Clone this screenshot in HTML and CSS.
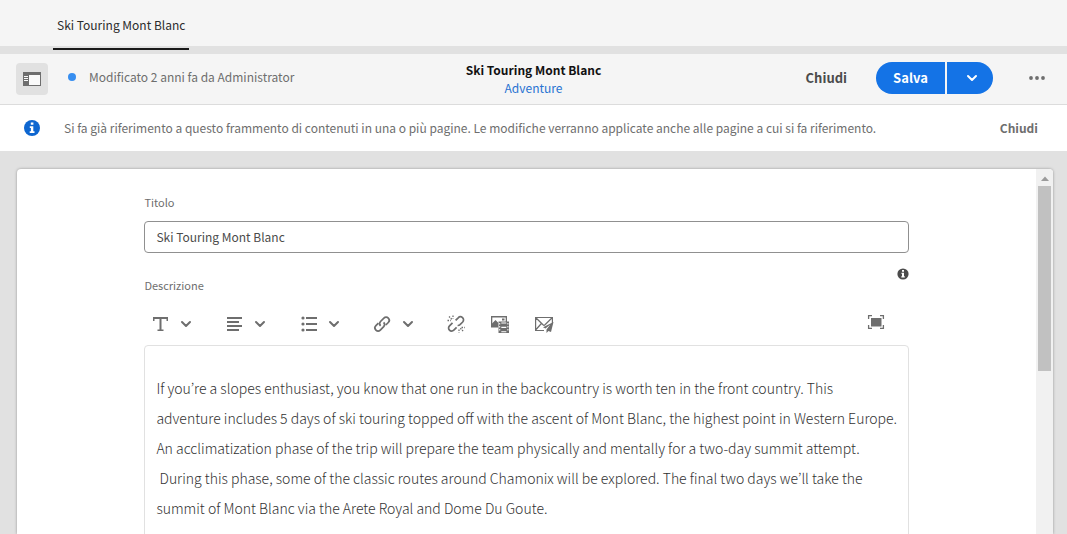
FILE: index.html
```html
<!DOCTYPE html>
<html lang="it">
<head>
<meta charset="utf-8">
<title>Ski Touring Mont Blanc</title>
<link rel="stylesheet" href="styles.css">
</head>
<body>
<nav class="tabs"><a class="tab" href="#">Ski Touring Mont Blanc</a></nav>
<header class="bar">
  <div class="bar-left">
    <button class="rail" aria-label="Pannello laterale">
      <svg width="20" height="16" viewBox="0 0 20 16"><path fill="#fafafa" d="M1 1h18v14H1z"/><path fill="#6e6e6e" fill-rule="evenodd" d="M1 1h18v14H1zM7 4v10h11V4zM2 5v1h4V5zM2 7v1h4V7zM2 9v1h4V9z"/></svg>
    </button>
    <span class="dot"></span>
    <span class="status">Modificato 2 anni fa da Administrator</span>
  </div>
  <div class="heading">
    <h1 class="title">Ski Touring Mont Blanc</h1>
    <a class="model" href="#">Adventure</a>
  </div>
  <div class="bar-right">
    <button class="quiet">Chiudi</button>
    <div class="split">
      <button class="save">Salva</button>
      <button class="save-more" aria-label="Altre opzioni di salvataggio"><svg width="12" height="8" viewBox="0 0 12 8"><path class="chev" d="M2 2l4 4 4-4"/></svg></button>
    </div>
    <button class="more" aria-label="Altro"><svg width="16" height="4" viewBox="0 0 16 4" fill="#6e6e6e"><circle cx="2" cy="2" r="1.900"/><circle cx="8" cy="2" r="1.900"/><circle cx="14" cy="2" r="1.900"/></svg></button>
  </div>
</header>
<div class="alert" role="status">
  <svg width="16" height="16" viewBox="0 0 16 16"><circle cx="8" cy="8" r="8" fill="#0d66d0"/><path fill="#fff" d="M6.800 2.500h2.600v2.300H6.800zM5.800 6.200h3.500v5h1.200V13H5.700v-1.800h1.200V8H5.800z"/></svg>
  <p class="alert-text">Si fa già riferimento a questo frammento di contenuti in una o più pagine. Le modifiche verranno applicate anche alle pagine a cui si fa riferimento.</p>
  <button class="dismiss">Chiudi</button>
</div>
<main class="stage">
  <section class="card">
    <div class="content">
      <form class="form">
        <label class="label" for="titolo">Titolo</label>
        <input class="field" id="titolo" type="text" value="Ski Touring Mont Blanc">
        <div class="hint"><svg width="12" height="12" viewBox="0 0 12 12"><circle cx="6" cy="6" r="5.600" fill="#4b4b4b"/><path fill="#fff" d="M5 2h2v1.700H5zM4.500 4.800H7v3.400h.8v1.300H4.300V8.200H5V6h-.5z"/></svg></div>
        <span class="label" id="descrizione">Descrizione</span>
        <div class="tools">
          <div class="group">
            <button type="button" class="tool" aria-label="Formato"><svg width="20" height="20" viewBox="0 0 20 20"><path class="ink" d="M3 3h15v4h-1.500V5h-5v10.500h2V17h-6v-1.500h2V5h-5v2H3z"/></svg></button>
            <button type="button" class="tool" aria-label="Opzioni formato"><svg width="12" height="8" viewBox="0 0 12 8"><path class="chev" d="M2 2l4 4 4-4"/></svg></button>
          </div>
          <div class="group">
            <button type="button" class="tool" aria-label="Allineamento"><svg width="20" height="20" viewBox="0 0 20 20"><path class="ink" d="M3 3h15v2H3zM3 7h12v2H3zM3 11h15v2H3zM3 15h12v2H3z"/></svg></button>
            <button type="button" class="tool" aria-label="Opzioni allineamento"><svg width="12" height="8" viewBox="0 0 12 8"><path class="chev" d="M2 2l4 4 4-4"/></svg></button>
          </div>
          <div class="group">
            <button type="button" class="tool" aria-label="Elenco"><svg width="20" height="20" viewBox="0 0 20 20"><path class="ink" d="M8 3h11v2H8zM8 9h11v2H8zM8 15h11v2H8z"/><g class="ink"><circle cx="5" cy="4" r="1.600"/><circle cx="5" cy="10" r="1.600"/><circle cx="5" cy="16" r="1.600"/></g></svg></button>
            <button type="button" class="tool" aria-label="Opzioni elenco"><svg width="12" height="8" viewBox="0 0 12 8"><path class="chev" d="M2 2l4 4 4-4"/></svg></button>
          </div>
          <div class="group">
            <button type="button" class="tool" aria-label="Collegamento"><svg width="20" height="20" viewBox="0 0 20 20"><g class="line"><path d="M8.600 11.800a3.100 3.100 0 0 1-.1-4.300l3.400-3.400a3.100 3.100 0 0 1 4.400 4.400l-2.500 2.500"/><path d="M11.600 8.400a3.100 3.100 0 0 1 .1 4.300l-3.400 3.400a3.100 3.100 0 0 1-4.400-4.400l2.500-2.500"/></g></svg></button>
            <button type="button" class="tool" aria-label="Opzioni collegamento"><svg width="12" height="8" viewBox="0 0 12 8"><path class="chev" d="M2 2l4 4 4-4"/></svg></button>
          </div>
          <div class="singles">
            <button type="button" class="tool" aria-label="Scollega"><svg width="20" height="20" viewBox="0 0 20 20"><g class="line"><path d="M9.600 6.400l2.600-2.600a3 3 0 0 1 4.500 4.200l-2.700 2.700a3 3 0 0 1-2.400.8M6.500 8.800 3.500 11.800a3 3 0 0 0 4.300 4.400l2.800-2.800"/><path stroke-width="1.300" stroke-dasharray="1.500 1" d="M1.500 6.500h3.200M3 2.500l3 3M7 1.500v3M15.500 13.500h3.200M14.300 14.300l3 3M13 15.500v3"/></g></svg></button>
            <button type="button" class="tool" aria-label="Inserisci contenuto"><svg width="20" height="20" viewBox="0 0 20 20"><path class="ink" fill-rule="evenodd" d="M1 2h16v6h-1.300V3.500H2.300V12H8v1.500H1z"/><path class="ink" d="M2 12V9.500L5.500 6 8 8.500V12zM12 4.500h2.500v2H12z"/><path class="ink" d="M8.500 7.500H19v11.500H8.500z"/><path fill="#fff" d="M11.300 8.500h5v1h-5zM11.300 12.700h5v1.200h-5zM11.300 17.200h5v1h-5zM9.200 9h1v1.500h-1zM9.200 12h1v1.500h-1zM9.200 15h1v1.500h-1zM17.400 9h1v1.500h-1zM17.400 12h1v1.500h-1zM17.400 15h1v1.500h-1z"/></svg></button>
            <button type="button" class="tool" aria-label="E-mail"><svg width="20" height="20" viewBox="0 0 20 20"><path fill="none" stroke="#6e6e6e" stroke-width="1.200" d="M10 16.500H1.600v-13h16.800V9M1.600 3.500 9 10.800q1 .9 2 0l7.400-7.300M1.600 16l5.800-6.500"/><path class="ink" d="M19.500 8 9 13.300l2.500 1.300 4.800-4.100-3.800 5v3.500l1.900-2.100 2.600 1.100z"/></svg></button>
          </div>
          <button type="button" class="tool full" aria-label="Schermo intero"><svg width="18" height="16" viewBox="0 0 18 16"><path class="ink" d="M4 4h10.500v8.500H4z"/><path fill="none" stroke="#6e6e6e" stroke-width="1.300" d="M1.600 5V1.600H5M13 1.600h3.400V5M16.400 11v3.400H13M5 14.400H1.600V11"/></svg></button>
        </div>
        <div class="editor" role="textbox" contenteditable="true" aria-labelledby="descrizione" spellcheck="false">If you’re a slopes enthusiast, you know that one run in the backcountry is worth ten in the front country. This<br>adventure includes 5 days of ski touring topped off with the ascent of Mont Blanc, the highest point in Western Europe.<br>An acclimatization phase of the trip will prepare the team physically and mentally for a two-day summit attempt.<br>&nbsp;During this phase, some of the classic routes around Chamonix will be explored. The final two days we’ll take the<br>summit of Mont Blanc via the Arete Royal and Dome Du Goute.</div>
      </form>
    </div>
    <div class="scroll"><svg width="8" height="5" viewBox="0 0 8 5"><path fill="#9b9b9b" d="M0 5 4 .5 8 5z"/></svg><div class="thumb"></div></div>
  </section>
</main>
</body>
</html>
```
FILE: styles.css
```css
* { box-sizing: border-box; }
body, button, input {
  font-family: "Noto Sans CJK KR", "Noto Sans", sans-serif;
  font-size: 12px;
}
body {
  margin: 0;
  height: 100vh;
  display: flex;
  flex-direction: column;
  overflow: hidden;
  background: #e1e1e1;
  color: #4b4b4b;
  line-height: 18px;
}
button { border: 0; padding: 0; background: none; color: inherit; line-height: 18px; }
a { text-decoration: none; }
svg { display: block; flex: none; }

.tabs {
  flex: none;
  height: 54px;
  padding-left: 53px;
  background: linear-gradient(#f5f5f5 46px, #e1e1e1 46px);
  display: flex;
  align-items: flex-start;
}
.tab {
  height: 50px;
  padding: 16px 4px 0;
  border-bottom: 2px solid #1a1a1a;
  color: #2c2c2c;
}

.bar {
  flex: none;
  height: 51px;
  padding: 0 16px;
  background: #f5f5f5;
  border-bottom: 1px solid #dcdcdc;
  display: grid;
  grid-template-columns: 1fr auto 1fr;
  align-items: center;
}
.bar-left { display: flex; align-items: center; }
.rail {
  width: 32px;
  height: 32px;
  border-radius: 4px;
  background: #e1e1e1;
  display: grid;
  place-items: center;
}
.dot {
  width: 8px;
  height: 8px;
  margin: 0 13px 5px 20px;
  border-radius: 50%;
  background: #378ef0;
}
.status { color: #6e6e6e; margin-bottom: 5px; }
.heading { text-align: center; display: flex; flex-direction: column; }
.title { margin: 0; font-size: 12px; font-weight: 700; line-height: 18px; color: #111; }
.model { color: #2873d2; }
.bar-right { display: flex; align-items: center; justify-content: flex-end; padding-bottom: 2px; }
.quiet { font-size: 13px; font-weight: 700; margin-right: 29px; color: #4b4b4b; }
.split { display: flex; gap: 2px; }
.save, .save-more { height: 32px; background: #1473e6; color: #fff; }
.save { width: 69px; border-radius: 16px 0 0 16px; font-size: 13px; font-weight: 700; }
.save-more { width: 46px; border-radius: 0 16px 16px 0; padding-left: 4px; display: grid; place-items: center; }
.more { width: 28px; height: 32px; margin-left: 30px; display: grid; place-items: center; }

.chev { fill: none; stroke: #6e6e6e; stroke-width: 2; stroke-linecap: round; stroke-linejoin: round; }
.save-more .chev { stroke: #fff; }
.ink { fill: #6e6e6e; }
.line { fill: none; stroke: #6e6e6e; stroke-width: 1.7; }

.alert {
  flex: none;
  height: 46px;
  padding: 0 29px 0 24px;
  background: #fff;
  color: #6e6e6e;
  display: flex;
  align-items: center;
}
.alert-text { margin: 0 0 0 24px; flex: 1; white-space: nowrap; }
.dismiss { font-weight: 700; }

.stage { flex: 1; min-height: 0; padding: 18px 14px 0 17px; }
.card {
  height: 100%;
  background: #fff;
  border-radius: 4px 4px 0 0;
  box-shadow: 0 0 3px rgba(0, 0, 0, .35);
  display: flex;
  overflow: hidden;
}
.content { flex: 1; min-width: 0; overflow: hidden; }
.form { width: 75%; margin: 0 auto; padding-top: 24px; display: flex; flex-direction: column; }
.label { font-size: 11px; line-height: 18px; color: #6e6e6e; }
.field {
  width: 100%;
  height: 32px;
  margin: 10px 0 15px;
  padding: 0 11px 2px;
  border: 1px solid #909090;
  border-radius: 4px;
  background: #fff;
  color: #4b4b4b;
}
.hint { display: flex; justify-content: flex-end; }
.hint + .label { margin-top: -4px; }
.tools { display: flex; align-items: center; gap: 28px; height: 32px; padding: 0 23px 0 6px; margin: 14px 0 5px; }
.group { display: flex; gap: 6px; }
.singles { display: flex; gap: 24px; }
.tool { width: 20px; height: 20px; display: grid; place-items: center; }
.full { margin-left: auto; padding-bottom: 6px; }
.editor {
  min-height: 320px;
  padding: 27px 0 24px 11px;
  border: 1px solid #e1e1e1;
  border-radius: 4px;
  font-size: 14px;
  font-weight: 300;
  line-height: 30px;
  white-space: nowrap;
  color: #323232;
}
.scroll {
  width: 17px;
  padding: 7px 2px 0;
  background: #f1f1f1;
  display: flex;
  flex-direction: column;
  align-items: center;
  gap: 5px;
}
.thumb { width: 100%; height: 185px; background: #c1c1c1; }
```
